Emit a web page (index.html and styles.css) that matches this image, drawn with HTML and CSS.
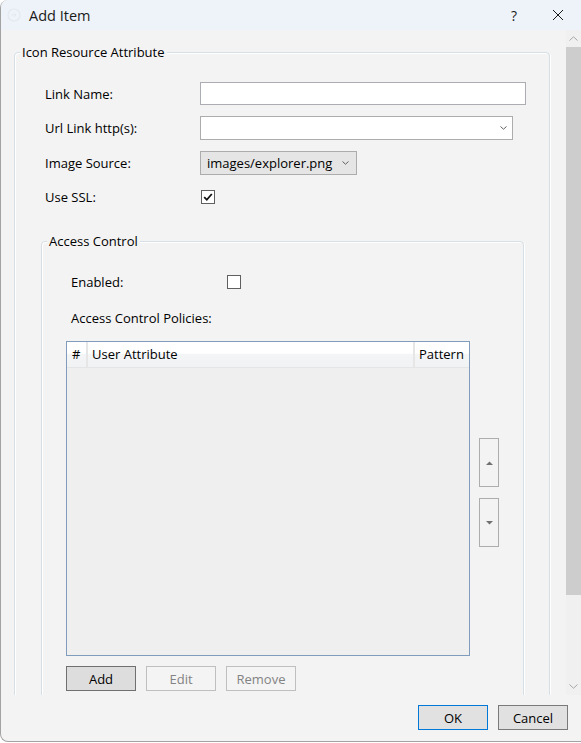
FILE: index.html
```html
<!DOCTYPE html>
<html lang="en">
<head>
<meta charset="utf-8">
<title>Add Item</title>
<link rel="stylesheet" href="styles.css">
</head>
<body>
<div class="window">
  <div class="titlebar">
    <span class="app-icon"><svg width="14" height="14" viewBox="0 0 14 14"><circle cx="7" cy="7" r="6" fill="none" stroke="#e3e8f0" stroke-width="1.2"/><path d="M4 7h5M7 5l2 2-2 2" fill="none" stroke="#e3e8f0" stroke-width="1"/></svg></span>
    <span class="title">Add Item</span>
    <span class="help">?</span>
    <span class="close"><svg width="12" height="12" viewBox="0 0 12 12"><path d="M1 1L11 11M11 1L1 11" stroke="#1a1a1a" stroke-width="1"/></svg></span>
  </div>
  <div class="main">
    <div class="viewport">
      <fieldset class="group outer">
        <legend>Icon Resource Attribute</legend>
        <div class="form">
          <label class="lbl">Link Name:</label>
          <div class="textbox wide"></div>
          <label class="lbl">Url Link http(s):</label>
          <div class="combo editable"><span class="combo-text"></span><svg class="chev" width="7" height="4" viewBox="0 0 7 4"><path d="M0.5 0.5L3.5 3.2L6.5 0.5" fill="none" stroke="#606060" stroke-width="1"/></svg></div>
          <label class="lbl">Image Source:</label>
          <div class="combo readonly"><span class="combo-text">images/explorer.png</span><svg class="chev" width="7" height="4" viewBox="0 0 7 4"><path d="M0.5 0.5L3.5 3.2L6.5 0.5" fill="none" stroke="#606060" stroke-width="1"/></svg></div>
          <label class="lbl">Use SSL:</label>
          <div class="cell-check"><span class="check"><svg width="12" height="12" viewBox="0 0 12 12"><path d="M2.2 6.2L4.8 8.8L9.8 3" fill="none" stroke="#111" stroke-width="1.8"/></svg></span></div>
        </div>
        <fieldset class="group inner">
          <legend>Access Control</legend>
          <div class="inner-body">
            <div class="enabled-row">
              <label class="lbl2">Enabled:</label>
              <span class="check"></span>
            </div>
            <div class="policies-label">Access Control Policies:</div>
            <div class="list-area">
              <div class="listview">
                <div class="lv-header">
                  <div class="col c-num">#</div>
                  <div class="col c-attr">User Attribute</div>
                  <div class="col c-pat">Pattern</div>
                </div>
                <div class="lv-body"></div>
              </div>
              <div class="movers">
                <button class="mover" type="button"><svg width="7" height="4" viewBox="0 0 7 4"><path d="M0 4L3.5 0.5L7 4Z" fill="#707070"/></svg></button>
                <button class="mover" type="button"><svg width="7" height="4" viewBox="0 0 7 4"><path d="M0 0L3.5 3.5L7 0Z" fill="#707070"/></svg></button>
              </div>
            </div>
            <div class="list-buttons">
              <button class="btn default" type="button">Add</button>
              <button class="btn" type="button" disabled>Edit</button>
              <button class="btn" type="button" disabled>Remove</button>
            </div>
          </div>
        </fieldset>
      </fieldset>
    </div>
    <div class="scrollbar">
      <div class="sb-arrow"><svg width="9" height="5" viewBox="0 0 9 5"><path d="M0.5 4.5L4.5 0.8L8.5 4.5" fill="none" stroke="#a6a6a6" stroke-width="1"/></svg></div>
      <div class="sb-thumb"></div>
      <div class="sb-track"></div>
      <div class="sb-arrow"><svg width="9" height="5" viewBox="0 0 9 5"><path d="M0.5 0.5L4.5 4.2L8.5 0.5" fill="none" stroke="#a6a6a6" stroke-width="1"/></svg></div>
    </div>
  </div>
  <div class="footer">
    <button class="btn ok" type="button">OK</button>
    <button class="btn cancel" type="button">Cancel</button>
  </div>
</div>
</body>
</html>
```
FILE: styles.css
```css
* { box-sizing: border-box; }
html, body { margin: 0; padding: 0; background: #ffffff; overflow: hidden; }
body {
  font-family: "Open Sans", "Noto Sans", sans-serif;
  font-size: 13px;
  color: #000;
}

.window {
  width: 581px;
  height: 742px;
  background: #f3f3f3;
  border-left: 1px solid #a3a3a3;
  border-bottom: 1px solid #a3a3a3;
  border-radius: 8px 0 0 8px;
  overflow: hidden;
  display: flex;
  flex-direction: column;
}

/* title bar */
.titlebar {
  height: 30px;
  flex: none;
  background: #eef3f9;
  display: flex;
  align-items: center;
}
.app-icon { width: 14px; height: 14px; margin-left: 6px; display: flex; }
.title { margin-left: 8px; font-size: 14.5px; color: #1a1a1a; }
.help { margin-left: auto; font-size: 14px; color: #1a1a1a; width: 12px; text-align: center; }
.close { margin-left: 32px; margin-right: 17px; display: flex; }

/* main scrolling region */
.main {
  height: 665px;
  flex: none;
  display: flex;
}
.viewport {
  width: 565px;
  height: 665px;
  overflow: hidden;
}

.group {
  margin: 0;
  padding: 0;
  min-inline-size: 0;
  border: 1px solid #d5dfe5;
  border-radius: 4px;
  box-shadow: inset 1px 1px 0 #ffffff, 1px 1px 0 #ffffff;
}
.group legend {
  margin-left: 5px;
  padding: 0 2px;
  line-height: 16px;
  height: 16px;
  background: #f3f3f3;
}
.outer {
  margin: 14px 0 0 13px;
  width: 536px;
  padding-bottom: 40px;
}

.form {
  margin-top: 22px;
  padding-left: 30px;
  display: grid;
  grid-template-columns: 155px auto;
  grid-template-rows: 23px 24px 24px 22px;
  row-gap: 11px;
  align-items: center;
  justify-items: start;
}
.lbl { line-height: 16px; }

.textbox {
  height: 23px;
  background: #fff;
  border: 1px solid #abadb3;
}
.textbox.wide { width: 326px; }

.combo {
  height: 24px;
  border: 1px solid #acacac;
  display: flex;
  align-items: center;
}
.combo.editable { width: 313px; background: #fff; }
.combo.readonly { width: 157px; background: #e5e5e5; }
.combo-text { flex: 1; padding-left: 6px; line-height: 16px; white-space: nowrap; }
.combo.editable .chev { margin-right: 5px; }
.combo.readonly .chev { margin-right: 7px; }

.cell-check { display: flex; padding-left: 1px; }
.check {
  width: 14px;
  height: 14px;
  border: 1px solid #5f5f5f;
  background: #fff;
  display: flex;
  align-items: center;
  justify-content: center;
}
.check svg { display: block; }

.inner {
  margin: 25px 0 0 26px;
  width: 483px;
  padding: 0 0 40px 0;
}
.inner-body { padding-left: 24px; }
.enabled-row {
  margin-top: 25px;
  height: 16px;
  display: flex;
  align-items: center;
}
.lbl2 { width: 161px; padding-left: 5px; line-height: 16px; }
.policies-label {
  margin-top: 20px;
  padding-left: 5px;
  line-height: 16px;
}

.list-area {
  margin-top: 15px;
  display: flex;
  align-items: flex-start;
}
.listview {
  width: 404px;
  height: 315px;
  border: 1px solid #7f9cbc;
  background: #efefef;
  display: flex;
  flex-direction: column;
}
.lv-header {
  height: 26px;
  display: flex;
  background: linear-gradient(#ffffff 0%, #ffffff 45%, #f4f5f7 50%, #f1f2f4 100%);
  border-bottom: 1px solid #e5e5e5;
}
.col {
  line-height: 25px;
  padding-left: 4px;
  border-right: 2px solid #e6e6e6;
  white-space: nowrap;
  overflow: hidden;
}
.c-num { width: 21px; padding-left: 5px; }
.c-attr { width: 327px; }
.c-pat { flex: 1; border-right: none; }
.lv-body { flex: 1; }

.movers {
  margin-left: 9px;
  padding-top: 97px;
  display: flex;
  flex-direction: column;
  gap: 11px;
}
.mover {
  width: 20px;
  height: 49px;
  padding: 0;
  border: 1px solid #adadad;
  background: #f3f3f3;
  display: flex;
  align-items: center;
  justify-content: center;
}

.list-buttons {
  margin-top: 10px;
  display: flex;
  gap: 10px;
}

.btn {
  width: 70px;
  height: 25px;
  padding: 0;
  font-family: inherit;
  font-size: 13px;
  color: #000;
  background: #e1e1e1;
  border: 1px solid #adadad;
}
.btn.default { background: #dddddd; border-color: #707070; }
.btn:disabled { background: #f4f4f4; border-color: #bfbfbf; color: #838383; }
.btn.ok { border-color: #0078d7; }
.btn.cancel { border-color: #7a7a7a; }

/* scrollbar */
.scrollbar {
  width: 15px;
  height: 665px;
  display: flex;
  flex-direction: column;
  background: #f0f0f0;
}
.sb-arrow {
  height: 17px;
  flex: none;
  display: flex;
  align-items: center;
  justify-content: center;
}
.sb-thumb { height: 548px; background: #cdcdcd; flex: none; }
.sb-track { flex: 1; }

/* footer */
.footer {
  flex: 1;
  display: flex;
  justify-content: flex-end;
  align-items: flex-start;
  gap: 10px;
  padding: 10px 13px 0 0;
}
```
